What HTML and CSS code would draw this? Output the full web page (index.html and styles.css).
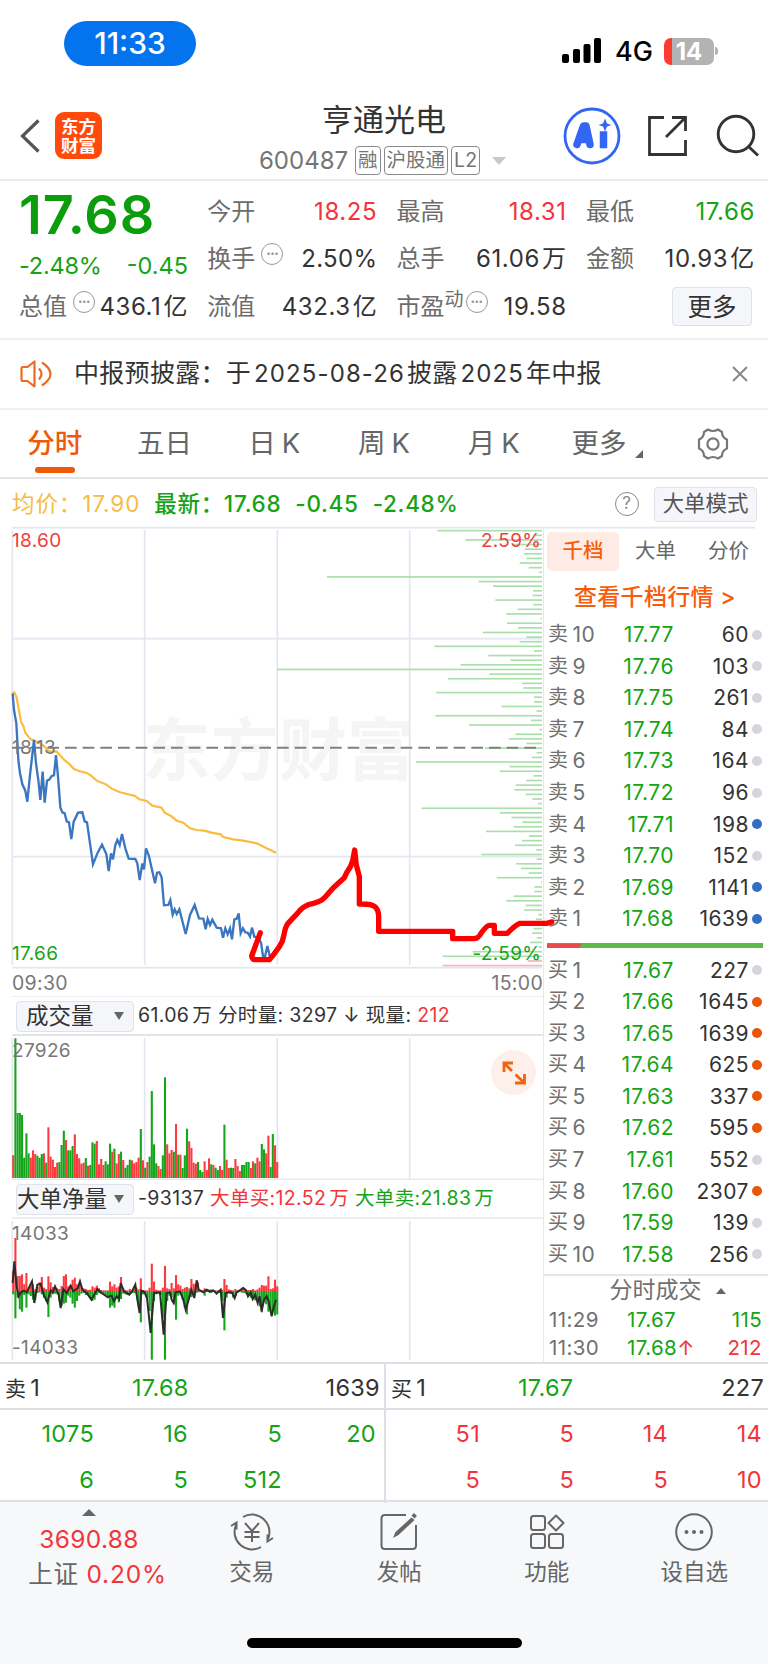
FILE: index.html
```html
<!DOCTYPE html>
<html lang="zh-CN">
<head>
    <meta charset="UTF-8">
    <meta name="viewport" content="width=device-width, initial-scale=1.0">
    <title>亨通光电 600487</title>
    <link rel="stylesheet" href="styles.css">
</head>
<body>
    <div class="status-bar">
        <div class="time-pill">11:33</div>
        <div class="status-right">
            <svg width="40" height="26" viewBox="0 0 40 26">
                <rect x="0" y="16" width="7" height="9" rx="2"/>
                <rect x="11" y="11" width="7" height="14" rx="2"/>
                <rect x="21.500" y="6" width="7" height="19" rx="2"/>
                <rect x="32" y="0" width="7" height="25" rx="2"/>
            </svg>
            <span class="network">4G</span>
            <div class="battery">14</div>
            <i class="battery-tip"></i>
        </div>
    </div>

    <header class="header">
        <div class="header-left">
            <svg class="back" width="22" height="36" viewBox="0 0 22 36">
                <path d="M18.500 2.500L2.500 18l16 15.500" fill="none" stroke="#555" stroke-width="3.200"/>
            </svg>
            <div class="logo">东方<br>财富</div>
        </div>
        <div class="header-title">
            <h1>亨通光电</h1>
            <div class="code">
                <span>600487</span>
                <b>融</b><b>沪股通</b><b>L2</b>
                <svg width="14" height="8" viewBox="0 0 14 8"><path d="M0 0h14L7 8z" fill="#c8c8c8"/></svg>
            </div>
        </div>
        <div class="header-icons">
            <svg width="58" height="58" viewBox="0 0 58 58" fill="none" stroke="#3366f5">
                <circle cx="29" cy="29" r="27" stroke-width="2.800"/>
                <path d="M14 37.500L20.500 19h2.500L27 37.500M18 32.500h8" stroke-width="7.500" stroke-linejoin="round" stroke-linecap="round"/>
                <path d="M40.500 28v9.500" stroke-width="7.500" stroke-linecap="square"/>
                <path d="M42 11.500l2 5 4.500 1.500-4.500 1.500-2 5-2-5-4.500-1.500 4.500-1.500z" fill="#3366f5" stroke="none"/>
            </svg>
            <svg width="42" height="42" viewBox="0 0 42 42" fill="none" stroke="#333" stroke-width="2.800">
                <path d="M17 2.500H2.500v37h36V25M25 2.500h13.500V16M38 3L19 22"/>
            </svg>
            <svg width="44" height="44" viewBox="0 0 44 44" fill="none" stroke="#333" stroke-width="2.900">
                <circle cx="20" cy="20" r="17.800"/>
                <path d="M32 32l10 9.500"/>
            </svg>
        </div>
    </header>

    <section class="quote">
        <div class="last">17.68</div>
        <div class="cell"><label>今开</label><span class="up">18.25</span></div>
        <div class="cell"><label>最高</label><span class="up">18.31</span></div>
        <div class="cell"><label>最低</label><span class="down">17.66</span></div>

        <div class="cell change down"><span>-2.48%</span><span>-0.45</span></div>
        <div class="cell"><label>换手<i class="tip">•••</i></label><span class="tight">2.50%</span></div>
        <div class="cell"><label>总手</label><span>61.06<em>万</em></span></div>
        <div class="cell"><label>金额</label><span>10.93<em>亿</em></span></div>

        <div class="cell"><label>总值<i class="tip">•••</i></label><span>436.1<em>亿</em></span></div>
        <div class="cell"><label>流值</label><span>432.3<em>亿</em></span></div>
        <div class="cell"><label>市盈<sup>动</sup><i class="tip flush">•••</i></label><span>19.58</span></div>
        <div class="cell end"><button class="more">更多</button></div>
    </section>

    <section class="notice">
        <svg width="34" height="28" viewBox="0 0 34 28" fill="none" stroke="#ef6a1f" stroke-width="2.200">
            <path d="M2.500 8.500Q2.500 7 4 7h4.500L15.500 1.500V26.500L8.500 21H4Q2.500 21 2.500 19.500z" stroke-linejoin="round"/>
            <path d="M20 8.500q5 5.500 0 11M23 2.500q17 11.500 0 23"/>
        </svg>
        <p>中报预披露：于<span>2025-08-26</span>披露<span>2025</span>年中报</p>
        <svg width="16" height="16" viewBox="0 0 16 16"><path d="M1 1l14 14M15 1L1 15" stroke="#888" stroke-width="2"/></svg>
    </section>

    <nav class="tabs">
        <a class="active">分时</a>
        <a>五日</a>
        <a>日<span>K</span></a>
        <a>周<span>K</span></a>
        <a>月<span>K</span></a>
        <a>更多<i></i></a>
        <a>
            <svg width="34" height="34" viewBox="0 0 34 34" fill="none" stroke="#777" stroke-width="2.200" stroke-linejoin="round">
                <path d="M12 2.500Q17 5.500 22 2.500L26 5Q26 10.500 31 12.500V21.500Q26 23.500 26 29L22 31.500Q17 28.500 12 31.500L8 29Q8 23.500 3 21.500V12.500Q8 10.500 8 5z"/>
                <circle cx="17" cy="17" r="5.600"/>
            </svg>
        </a>
    </nav>

    <section class="summary">
        <span class="avg">均价：17.90</span>
        <span class="down">最新：17.68</span>
        <span class="down">-0.45</span>
        <span class="down">-2.48%</span>
        <i class="help">?</i>
        <button>大单模式</button>
    </section>

    <main class="board">
        <div class="charts">
            <svg class="price-chart" id="priceChart" width="543" height="441" viewBox="0 21 1629 1323"></svg>
            <div class="time-axis"><span>09:30</span><span>15:00</span></div>
            <div class="indicator">
                <button class="select">成交量<i></i></button>
                <p>61.06<span class="wan">万</span> 分时量: 3297 ↓ 现量: <span class="up">212</span></p>
            </div>
            <div class="sub-chart">
                <svg id="volumeChart" width="543" height="144" viewBox="0 138 1629 432"></svg>
                <div class="expand">
                    <svg width="24" height="24" viewBox="0 0 24 24" fill="none" stroke="#ef6412" stroke-width="2.800">
                        <path d="M2 11V2h9M2 2l8 8M22.500 13v9H13M22.500 22l-9-8.500"/>
                    </svg>
                </div>
            </div>
            <div class="indicator second">
                <button class="select wide">大单净量<i></i></button>
                <p>-93137 <span class="up">大单买:12.52<span class="wan">万</span></span> <span class="down">大单卖:21.83<span class="wan">万</span></span></p>
            </div>
            <svg id="netChart" width="543" height="144" viewBox="0 688 1629 432"></svg>
        </div>

        <aside class="book">
            <div class="book-tabs"><a class="active">千档</a><a>大单</a><a>分价</a></div>
            <a class="book-link">查看千档行情 &gt;</a>
            <div class="levels" id="asks"></div>
            <div class="ratio"><i></i></div>
            <div class="levels" id="bids"></div>
            <div class="ticks">
                <h3>分时成交<i></i></h3>
                <div class="tick"><span>11:29</span><b>17.67</b><span class="down">115</span></div>
                <div class="tick"><span>11:30</span><b>17.68<em>↑</em></b><span class="up">212</span></div>
            </div>
        </aside>
    </main>

    <section class="queue">
        <div class="side">
            <div class="queue-head"><span>卖<s>1</s></span><b>17.68</b><span>1639</span></div>
            <div class="queue-grid down">
                <span>1075</span><span>16</span><span>5</span><span>20</span>
                <span>6</span><span>5</span><span>512</span>
            </div>
        </div>
        <div class="side">
            <div class="queue-head"><span>买<s>1</s></span><b>17.67</b><span>227</span></div>
            <div class="queue-grid up">
                <span>51</span><span>5</span><span>14</span><span>14</span>
                <span>5</span><span>5</span><span>5</span><span>10</span>
            </div>
        </div>
    </section>

    <footer class="bottom">
        <div class="bottom-nav">
            <div class="index">
                <i></i>
                <strong class="up">3690.88</strong>
                <p>上证 <span class="up">0.20%</span></p>
            </div>
            <a>
                <svg width="44" height="38" viewBox="0 0 44 38" fill="none" stroke="#666" stroke-width="2">
                    <path d="M13 4A17.500 17.500 0 0 1 38 26M31 34A17.500 17.500 0 0 1 6 12"/>
                    <path d="M1 13l5.500-3.500v7M43 25l-5.500 3.500v-7"/>
                    <path d="M15 10l7 8 7-8M14.500 19h15M14.500 24h15M22 18v11"/>
                </svg>
                <span>交易</span>
            </a>
            <a>
                <svg width="44" height="38" viewBox="0 0 44 38" fill="none" stroke="#666" stroke-width="2">
                    <path d="M29 2H8Q4.500 2 4.500 5.500V32.500Q4.500 36 8 36H35.500Q39 36 39 32.500V12"/>
                    <path d="M16 25L18.500 19 34.500 4.500l3 2.500L21.500 22z" fill="#666" stroke="none"/>
                    <path d="M36 4l2.500-2.500" stroke-width="4"/>
                </svg>
                <span>发帖</span>
            </a>
            <a>
                <svg width="44" height="38" viewBox="0 0 44 38" fill="none" stroke="#666" stroke-width="2">
                    <rect x="6" y="3" width="14" height="14" rx="2.500"/>
                    <path d="M31 2.500l7.500 7.500-7.500 7.500-7.500-7.500z" stroke-linejoin="round"/>
                    <rect x="6" y="21" width="14" height="14" rx="2.500"/>
                    <rect x="24" y="21" width="14" height="14" rx="2.500"/>
                </svg>
                <span>功能</span>
            </a>
            <a>
                <svg width="44" height="38" viewBox="0 0 44 38" fill="none" stroke="#666" stroke-width="2">
                    <circle cx="22" cy="19" r="17.800"/>
                    <g fill="#666" stroke="none"><circle cx="14.500" cy="19" r="2"/><circle cx="22" cy="19" r="2"/><circle cx="29.500" cy="19" r="2"/></g>
                </svg>
                <span>设自选</span>
            </a>
        </div>
        <div class="home-indicator"></div>
    </footer>

    <script src="script.js"></script>
</body>
</html>
```
FILE: styles.css
```css
* {
    box-sizing: border-box;
}
body {
    margin: 0;
    width: 768px;
    height: 1664px;
    overflow: hidden;
    background: #fff;
    color: #333;
    font-family: Inter, "Noto Sans CJK SC", sans-serif;
    font-size: 24px;
    line-height: 1;
}
h1, h3, p {
    margin: 0;
    font-weight: 400;
}
i, em, s {
    font-style: normal;
    text-decoration: none;
}
button {
    padding: 0;
    font-family: inherit;
    line-height: 1;
    color: #333;
    background: #f5f6f9;
    border: 1.5px solid #dfe2ea;
    border-radius: 4px;
}
svg {
    display: block;
    flex: none;
}
.up {
    color: #f2353a;
}
.down {
    color: #16a316;
}

/* status bar */
.status-bar {
    display: flex;
    justify-content: space-between;
    height: 92px;
    padding: 21px 50px 0 64px;
}
.time-pill {
    width: 132px;
    height: 45px;
    border-radius: 23px;
    background: #0473ee;
    color: #fff;
    font-size: 30px;
    font-weight: 500;
    line-height: 45px;
    text-align: center;
}
.status-right {
    display: flex;
    align-items: center;
    height: 60px;
    color: #000;
}
.network {
    margin-left: 13px;
    font-size: 27px;
    font-weight: 500;
}
.battery {
    width: 50px;
    height: 27px;
    margin-left: 11px;
    border-radius: 7px;
    background: linear-gradient(90deg, #fd3b30 8px, #b3b3b3 8px);
    color: #fff;
    font-size: 24px;
    font-weight: 700;
    line-height: 27px;
    text-align: center;
}
.battery-tip {
    width: 3px;
    height: 8px;
    margin-left: 1px;
    border-radius: 0 3px 3px 0;
    background: #b3b3b3;
}

/* header */
.header {
    display: grid;
    grid-template-columns: 1fr 300px 1fr;
    height: 89px;
    border-bottom: 2px solid #ececec;
}
.header-left {
    display: flex;
    align-items: center;
    padding-left: 20px;
}
.logo {
    width: 47px;
    height: 47px;
    margin-left: 13px;
    padding-top: 5px;
    border-radius: 9px;
    background: #ff4a0c;
    color: #fff;
    font-size: 17.5px;
    font-weight: 700;
    line-height: 19px;
    text-align: center;
}
.header-title {
    text-align: center;
    padding-top: 11px;
}
.header-title h1 {
    font-size: 31px;
    line-height: 34px;
}
.code {
    display: flex;
    align-items: center;
    justify-content: center;
    margin: 9px 3px 0 0;
    color: #757575;
    font-size: 24px;
}
.code span {
    margin-right: 7px;
}
.code b {
    height: 29px;
    padding: 0 2px;
    margin-right: 3px;
    border: 1.5px solid #8a8a8a;
    border-radius: 4px;
    font-size: 19.5px;
    font-weight: 400;
    line-height: 26px;
}
.code svg {
    margin-left: 9px;
}
.header-icons {
    display: flex;
    align-items: center;
    justify-content: flex-end;
    gap: 26px;
    padding-right: 8px;
}
.header-icons svg:last-child {
    margin-left: 1px;
}

/* quote */
.quote {
    display: grid;
    grid-template-columns: 169px 170px 170px 169px;
    grid-auto-rows: 47.5px;
    column-gap: 19.3px;
    height: 159px;
    padding: 7px 0 0 19px;
    border-bottom: 2px solid #eeeff4;
    letter-spacing: 0.6px;
}
.last {
    padding-top: 6px;
    color: #0c9d0c;
    font-size: 54px;
    font-weight: 600;
    line-height: 42px;
    letter-spacing: 0.8px;
}
.cell {
    display: flex;
    align-items: center;
    justify-content: space-between;
    white-space: nowrap;
}
.cell label {
    display: flex;
    align-items: center;
    color: #6c6c6c;
    letter-spacing: 0;
}
.cell em {
    margin-left: 2px;
}
.cell.change {
    padding-top: 12px;
    letter-spacing: 0;
    font-size: 23.5px;
}
.cell.change span:first-child {
    letter-spacing: -0.2px;
}
.cell.end {
    justify-content: flex-end;
    padding-right: 3px;
}
.tip {
    width: 22px;
    height: 22px;
    margin: -10px 0 0 6px;
    border: 1.5px solid #999;
    border-radius: 50%;
    color: #999;
    font-size: 8px;
    line-height: 19px;
    letter-spacing: -0.5px;
    text-align: center;
}
.tip.flush {
    margin-left: 2px;
}
.tight {
    letter-spacing: 0.3px;
}
.cell sup {
    margin-top: -14px;
    font-size: 19px;
    line-height: 19px;
}
.more {
    width: 80px;
    height: 39px;
    font-size: 24.5px;
}

/* notice */
.notice {
    display: flex;
    align-items: center;
    height: 70px;
    padding: 0 20px 1px 19px;
    border-bottom: 2px solid #f0f0f0;
}
.notice p {
    flex: 1;
    margin-left: 21px;
    font-size: 25px;
    letter-spacing: 0.3px;
}
.notice p span {
    margin: 0 2px 0 3px;
    font-size: 24px;
    letter-spacing: 1.1px;
}

/* tabs */
.tabs {
    display: grid;
    grid-template-columns: repeat(7, 1fr);
    height: 69px;
    border-bottom: 2px solid #e2e4ea;
}
.tabs a {
    position: relative;
    display: flex;
    align-items: center;
    justify-content: center;
    padding-top: 1px;
    color: #666;
    font-size: 27.5px;
}
.tabs a span {
    margin-left: 6px;
}
.tabs a i {
    align-self: flex-end;
    margin: 0 -8px 19px 9px;
    border-left: 8px solid transparent;
    border-bottom: 8px solid #666;
}
.tabs .active {
    color: #ee5a0a;
    font-weight: 500;
}
.tabs .active::after {
    content: "";
    position: absolute;
    bottom: 4px;
    width: 40px;
    height: 6px;
    border-radius: 3px;
    background: #ee5a0a;
}

/* average / latest price */
.summary {
    display: flex;
    align-items: center;
    height: 48px;
    padding: 2px 11px 0 12px;
    font-size: 22.5px;
    letter-spacing: 0.7px;
}
.summary span {
    margin-right: 14px;
}
.summary .down {
    font-weight: 500;
}
.summary .avg {
    color: #f8bb45;
    letter-spacing: 0.9px;
}
.help {
    width: 24px;
    height: 24px;
    margin-left: auto;
    border: 1.5px solid #888;
    border-radius: 50%;
    color: #888;
    font-size: 17px;
    line-height: 21px;
    text-align: center;
}
.summary button {
    width: 103px;
    height: 35px;
    margin-left: 15px;
    color: #555;
    font-size: 21.5px;
}

/* charts */
.board {
    display: grid;
    grid-template-columns: 543px 225px;
    height: 837px;
    border-bottom: 2px solid #dddfe6;
}
.price-chart {
    position: relative;
    z-index: 1;
    overflow: visible;
}
.time-axis {
    display: flex;
    justify-content: space-between;
    height: 29px;
    margin-left: 12px;
    padding-top: 6px;
    border-bottom: 1.5px solid #ededf0;
    color: #777;
    font-size: 19.5px;
    letter-spacing: 0.3px;
}
.indicator {
    display: flex;
    align-items: center;
    height: 39px;
    margin-left: 12px;
    padding: 1px 0 0 4px;
    border-bottom: 2px solid #e2e4ea;
    font-size: 19.5px;
    white-space: nowrap;
}
.indicator.second {
    border-bottom-color: #ededf0;
}
.select {
    display: flex;
    align-items: center;
    justify-content: space-between;
    width: 118px;
    height: 31px;
    padding: 0 9px;
    font-size: 22.5px;
}
.select.wide {
    padding-left: 0;
}
.select i, .ticks h3 i, .index i {
    border: 5px solid transparent;
    border-top: 8px solid #666;
    border-bottom: 0;
}
.indicator p {
    margin-left: 4px;
    letter-spacing: 0.35px;
}
.wan {
    margin-left: 3px;
}
.sub-chart {
    position: relative;
}
.expand {
    position: absolute;
    top: 14px;
    right: 7px;
    display: flex;
    align-items: center;
    justify-content: center;
    width: 45px;
    height: 45px;
    border-radius: 50%;
    background: #fdf0ea;
}

/* order book */
.book {
    border-left: 1.5px solid #e4e6f0;
    padding: 5px 4px 0 3px;
}
.book-tabs {
    display: grid;
    grid-template-columns: 72px 73px 57px;
    height: 39px;
    color: #666;
    font-size: 20.5px;
    line-height: 38px;
    text-align: center;
}
.book-tabs a:last-child {
    text-align: right;
}
.book-tabs .active {
    border-radius: 5px;
    background: #feece4;
    color: #f75c0c;
    font-weight: 500;
}
.book-link {
    display: block;
    height: 48px;
    padding-left: 27px;
    color: #f75c0c;
    font-size: 23px;
    font-weight: 500;
    line-height: 53px;
    letter-spacing: 0.3px;
}
.levels {
    display: grid;
    grid-auto-rows: 31.55px;
}
.level {
    display: grid;
    grid-template-columns: 48px 78px 75px 10px;
    align-items: center;
    padding-left: 1px;
    font-size: 21px;
    letter-spacing: 0.5px;
    text-align: right;
}
.level span {
    display: flex;
    gap: 4px;
    color: #707070;
    font-size: 20px;
}
.level span s {
    font-size: 21px;
}
.level b, .tick b, .queue-head b {
    color: #16a316;
    font-weight: 400;
}
.level i {
    width: 10px;
    height: 10px;
    margin-left: 3px;
    border-radius: 50%;
    background: #d3d6dd;
}
.level .blue {
    background: #2f6fc4;
}
.level .orange {
    background: #ea5506;
}
.ratio {
    height: 5px;
    margin: 9px 1px 6px 0;
    background: #5cba46;
}
.ratio i {
    display: block;
    width: 35px;
    height: 5px;
    background: #e94b4b;
    clip-path: polygon(0 0, 100% 0, 91% 100%, 0 100%);
}
.ticks {
    margin: 4px -4px 0 -3px;
    padding: 0 6px 0 5px;
    border-top: 2px solid #e4e6ee;
}
.ticks h3 {
    display: flex;
    align-items: center;
    justify-content: center;
    height: 30px;
    padding-left: 24px;
    color: #707070;
    font-size: 23px;
}
.ticks h3 i {
    margin-left: 14px;
    border-top: 0;
    border-bottom: 6px solid #666;
}
.tick {
    display: grid;
    grid-template-columns: 78px 1fr auto;
    align-items: center;
    height: 28.5px;
    color: #707070;
    font-size: 20.5px;
    letter-spacing: 0.4px;
}
.tick em {
    color: #f2353a;
    margin-right: -2px;
}

/* queue at the best prices */
.queue {
    display: grid;
    grid-template-columns: 1fr 1fr;
    height: 138px;
    border-bottom: 2px solid #dddfe6;
}
.side + .side {
    border-left: 2px solid #dddfe6;
}
.queue-head {
    display: grid;
    grid-template-columns: 127px 1fr auto;
    align-items: center;
    height: 46px;
    padding: 3px 4px 0 5px;
    border-bottom: 2px solid #dddfe6;
    font-size: 23.5px;
    letter-spacing: 0.3px;
}
.queue-head span:first-child {
    font-size: 21px;
}
.queue-head s {
    margin-left: 4px;
    font-size: 23.5px;
}
.queue-grid {
    display: grid;
    grid-template-columns: repeat(4, 94px);
    grid-auto-rows: 46px;
    align-items: center;
    padding-top: 1px;
    text-align: right;
    font-size: 23.5px;
    letter-spacing: 0.3px;
}

/* bottom bar */
.bottom {
    height: 162px;
    background: #f7f8fa;
}
.bottom-nav {
    display: grid;
    grid-template-columns: 178px repeat(4, 1fr);
    height: 136px;
    padding-top: 11px;
}
.bottom-nav a, .index {
    display: flex;
    flex-direction: column;
    align-items: center;
    color: #666;
    font-size: 22.5px;
}
.bottom-nav a span {
    margin-top: 10px;
}
.index i {
    margin: -4px 0 11px;
    border-width: 7px;
    border-top: 0;
    border-bottom: 7px solid #666;
}
.index strong {
    font-weight: 400;
    font-size: 24.5px;
    letter-spacing: 0.3px;
}
.index p {
    margin: 10px 0 0 17px;
    font-size: 24.5px;
    letter-spacing: 0.8px;
}
.home-indicator {
    width: 275px;
    height: 10px;
    margin: 0 auto;
    border-radius: 5px;
    background: #000;
}

/* svg parts */
.grid-line {
    stroke: #e4e6f0;
    stroke-width: 5;
}
.chart-label {
    font-size: 57px;
    letter-spacing: 1px;
    fill: #777;
}
.chart-label.up {
    fill: #ee4040;
}
.chart-label.down {
    fill: #16a316;
}
.watermark {
    font-size: 204px;
    font-weight: 700;
    fill: #f5f5f6;
}
```
FILE: script.js
```js
const GREEN = '#16a61c';
const RED = '#fb3b3f';
const STEP = 6.6;
const LEFT = 36.5;

// order book: volume, dot colour
const asks = [[60], [103], [261], [84], [164], [96], [198, 'blue'], [152], [1141, 'blue'], [1639, 'blue']];
const bids = [[227], [1645, 'orange'], [1639, 'orange'], [625, 'orange'], [337, 'orange'], [595, 'orange'], [552], [2307, 'orange'], [139], [256]];

function level(side, n, price, row) {
    return `<div class="level"><span>${side}<s>${n}</s></span><b>${price}</b>${row[0]}<i class="${row[1] || ''}"></i></div>`;
}
document.getElementById('asks').innerHTML = asks.map((r, i) => level('卖', 10 - i, (17.77 - i * 0.01).toFixed(2), r)).join('');
document.getElementById('bids').innerHTML = bids.map((r, i) => level('买', i + 1, (17.67 - i * 0.01).toFixed(2), r)).join('');

function vLines(top, bottom) {
    return [37, 434, 832, 1229].map(x => `<path class="grid-line" d="M${x} ${top}V${bottom}"/>`).join('');
}

// price chart
const price = '38,520 42,570 49,610 55,720 60,760 67,793 76,812 82,845 90,765 102,660 108,730 115,780 121,840 128,755 134,848 141,782 148,779 155,768 162,766 168,705 174,770 181,862 187,877 194,880 200,904 207,907 214,957 221,905 234,878 247,877 254,904 261,907 270,970 279,1033 293,998 306,974 319,1002 326,1053 333,1000 339,1018 346,975 352,960 359,975 366,942 376,985 386,1016 406,1017 412,1030 419,1080 427,1030 432,1048 438,985 446,1005 455,1045 465,1090 471,1058 478,1057 485,1072 492,1156 505,1155 511,1140 518,1184 524,1168 530,1182 538,1168 557,1242 570,1185 584,1155 597,1195 610,1196 617,1228 623,1197 630,1215 637,1199 650,1223 663,1225 669,1253 676,1225 683,1243 690,1225 696,1258 703,1198 710,1196 716,1180 722,1240 729,1225 736,1237 743,1238 750,1250 756,1223 763,1250 775,1253 783,1268 789,1308 795,1310 802,1278 810,1310 815,1318';
const average = '38,516 43,517 50,533 63,605 70,618 76,638 92,658 115,667 132,678 145,693 170,695 180,706 195,722 208,732 222,747 235,752 262,760 272,766 290,782 318,793 335,806 360,817 405,828 418,838 440,843 457,857 485,863 494,878 515,889 530,902 550,908 570,925 590,930 612,932 635,938 662,943 670,951 700,958 725,961 770,970 800,985 828,998';
const sketch = 'M781 1238L755 1308Q757 1319 765 1319H808L820 1305L838 1280Q850 1262 852 1244Q856 1220 864 1210L895 1177Q905 1162 925 1154Q962 1147 975 1132L1000 1103L1033 1073L1040 1058Q1054 1040 1058 1022L1064 990L1069 1035L1078 1070V1152Q1115 1151 1125 1160Q1136 1170 1136 1190V1234H1358V1256H1420Q1435 1256 1443 1240Q1460 1216 1468 1216H1483V1240H1522Q1545 1216 1560 1210H1640L1655 1206';
const depth = [
    314, 26, 230, 86, 51, 54, 47, 67, 40, 8, 645, 190, 147, 27, 28, 140, 26, 73, 107, 4,
    105, 72, 177, 47, 67, 323, 24, 161, 95, 244, 795, 158, 282, 60, 56, 317, 24, 24, 121, 16,
    320, 33, 219, 8, 80, 100, 47, 171, 16, 31, 378, 97, 127, 25, 47, 79, 83, 49, 29, 12,
    361, 127, 92, 59, 85, 168, 39, 60, 81, 17, 182, 16, 77, 63, 40, 136, 3, 23, 23, 85,
    107, 49, 54, 11, 18, 76, 26, 30, 16, 36, 11, 208, 298, 43, 298
];

document.getElementById('priceChart').innerHTML = `
    <text class="watermark" x="428" y="764">东方财富</text>
    ${vLines(30, 1334)}
    <path class="grid-line" d="M36 23H2265M36 356H1626M36 1010H1626M36 1343H1626"/>
    ${depth.map((w, i) => `<rect x="${1626 - w}" y="${29.5 + i * 13.88}" width="${w}" height="5" fill="${i > 92 ? '#f9b4b6' : '#aadfab'}"/>`).join('')}
    <path d="M36 683H1626" stroke="#808080" stroke-width="6" stroke-dasharray="35 18"/>
    <polyline points="${average}" fill="none" stroke="#fbbb3c" stroke-width="6.5"/>
    <polyline points="${price}" fill="none" stroke="#3a77c0" stroke-width="7"/>
    <text class="chart-label up" x="36" y="82">18.60</text>
    <text class="chart-label" x="36" y="701">18.13</text>
    <text class="chart-label down" x="36" y="1319">17.66</text>
    <text class="chart-label up" x="1624" y="82" text-anchor="end">2.59%</text>
    <text class="chart-label down" x="1624" y="1319" text-anchor="end">-2.59%</text>
    <path d="${sketch}" fill="none" stroke="#f00" stroke-width="16" stroke-linejoin="round" stroke-linecap="round"/>`;

// one bar per minute, r = rising, g = falling
const volume = ('r68 g419 g195 g195 g189 g61 g134 g74 r61 r83 r72 g67 g61 g72 r74 g46 r152 r64 r55 r33 r46 g48 g99 g142 r114 g83 g83 g96 r131 r72 ' +
    'r59 r43 r46 g60 r37 g39 g107 g103 r111 r41 r57 r39 g50 g41 g103 r79 g88 r44 r72 g79 r54 g31 g39 g55 r53 r44 r48 r61 g147 r53 ' +
    'g31 r48 g64 g261 g101 g44 r36 r27 g68 g302 r101 r74 r84 g79 r162 g70 r70 g30 g68 g148 r110 r90 r46 r43 g48 g24 g18 r50 r24 r59 ' +
    'g41 r39 g31 g24 r36 r24 g160 r55 r30 g31 g30 r57 r36 r21 g39 g39 g48 g48 r30 r50 g44 r61 r50 g102 g86 r74 r127 g33 g132 r98 r48').split(' ');

function bar(i, y, h, color) {
    return `<rect x="${(LEFT + i * STEP).toFixed(1)}" y="${y}" width="6.3" height="${h}" fill="${color}"/>`;
}

document.getElementById('volumeChart').innerHTML = vLines(144, 566) +
    volume.map((v, i) => bar(i, 564 - v.slice(1), v.slice(1), v[0] === 'r' ? RED : GREEN)).join('') +
    '<text class="chart-label" x="36" y="202">27926</text>' +
    '<path class="grid-line" d="M36 569H1629"/>';

// big orders: bought above the axis, sold below
const bought = [60, 159, 45, 45, 50, 20, 54, 10, 15, 20, 5, 12, 26, 42, 10, 6, 44, 26, 12, 6, 8, 6, 15, 45, 50, 14, 18, 34, 40, 20,
    25, 15, 8, 6, 3, 4, 14, 10, 16, 8, 3, 2, 2, 2, 28, 14, 20, 10, 14, 42, 8, 3, 2, 6, 2, 6, 10, 5, 38, 3,
    2, 2, 10, 82, 28, 4, 2, 2, 10, 75, 8, 6, 24, 8, 48, 20, 16, 6, 10, 12, 8, 36, 22, 20, 26, 2, 2, 8, 3, 4,
    5, 3, 2, 2, 3, 4, 36, 18, 5, 3, 2, 6, 3, 2, 10, 8, 4, 3, 3, 6, 2, 5, 10, 18, 16, 16, 44, 6, 8, 34, 14];
const sold = [10, 82, 20, 55, 62, 12, 50, 10, 15, 26, 26, 6, 4, 10, 20, 30, 78, 20, 10, 8, 10, 30, 45, 38, 35, 14, 20, 38, 50, 30,
    14, 8, 6, 12, 12, 20, 30, 26, 12, 6, 8, 12, 14, 22, 50, 44, 50, 20, 34, 24, 8, 10, 12, 8, 6, 6, 8, 40, 94, 10,
    10, 20, 60, 206, 30, 10, 8, 12, 80, 206, 30, 14, 18, 38, 86, 14, 10, 26, 50, 70, 20, 18, 10, 6, 4, 3, 3, 14, 3, 4,
    6, 3, 3, 4, 6, 30, 118, 20, 6, 8, 20, 14, 4, 3, 5, 6, 10, 14, 20, 24, 28, 26, 46, 64, 34, 40, 62, 60, 60, 74, 70];
const net = '38,880 43,815 50,890 56,920 63,908 72,903 80,908 96,875 103,940 112,885 122,882 131,915 142,938 152,902 158,908 165,890 176,915 182,955 190,898 200,910 212,888 220,905 234,895 240,875 247,900 260,910 274,930 292,898 305,910 322,922 335,918 342,935 350,920 357,928 362,880 372,905 388,915 396,905 406,885 412,930 419,970 424,903 434,908 441,925 452,1030 462,910 480,908 491,1035 500,910 510,908 515,930 521,940 527,908 540,905 550,930 557,960 566,930 574,900 583,925 590,872 596,900 610,908 620,900 630,906 640,902 650,912 662,900 669,985 677,910 688,908 697,910 704,925 710,908 730,895 738,902 744,920 752,908 758,928 766,915 773,940 779,920 785,965 792,930 800,920 806,935 815,980 822,950 828,930';

document.getElementById('netChart').innerHTML = vLines(694, 1112) +
    bought.map((v, i) => bar(i, 904 - v, v, RED)).join('') +
    sold.map((v, i) => bar(i, 904, v, GREEN)).join('') +
    `<polyline points="${net}" fill="none" stroke="#2b2b2b" stroke-width="6"/>` +
    '<text class="chart-label" x="36" y="750">14033</text>' +
    '<text class="chart-label" x="36" y="1094">-14033</text>';
```
